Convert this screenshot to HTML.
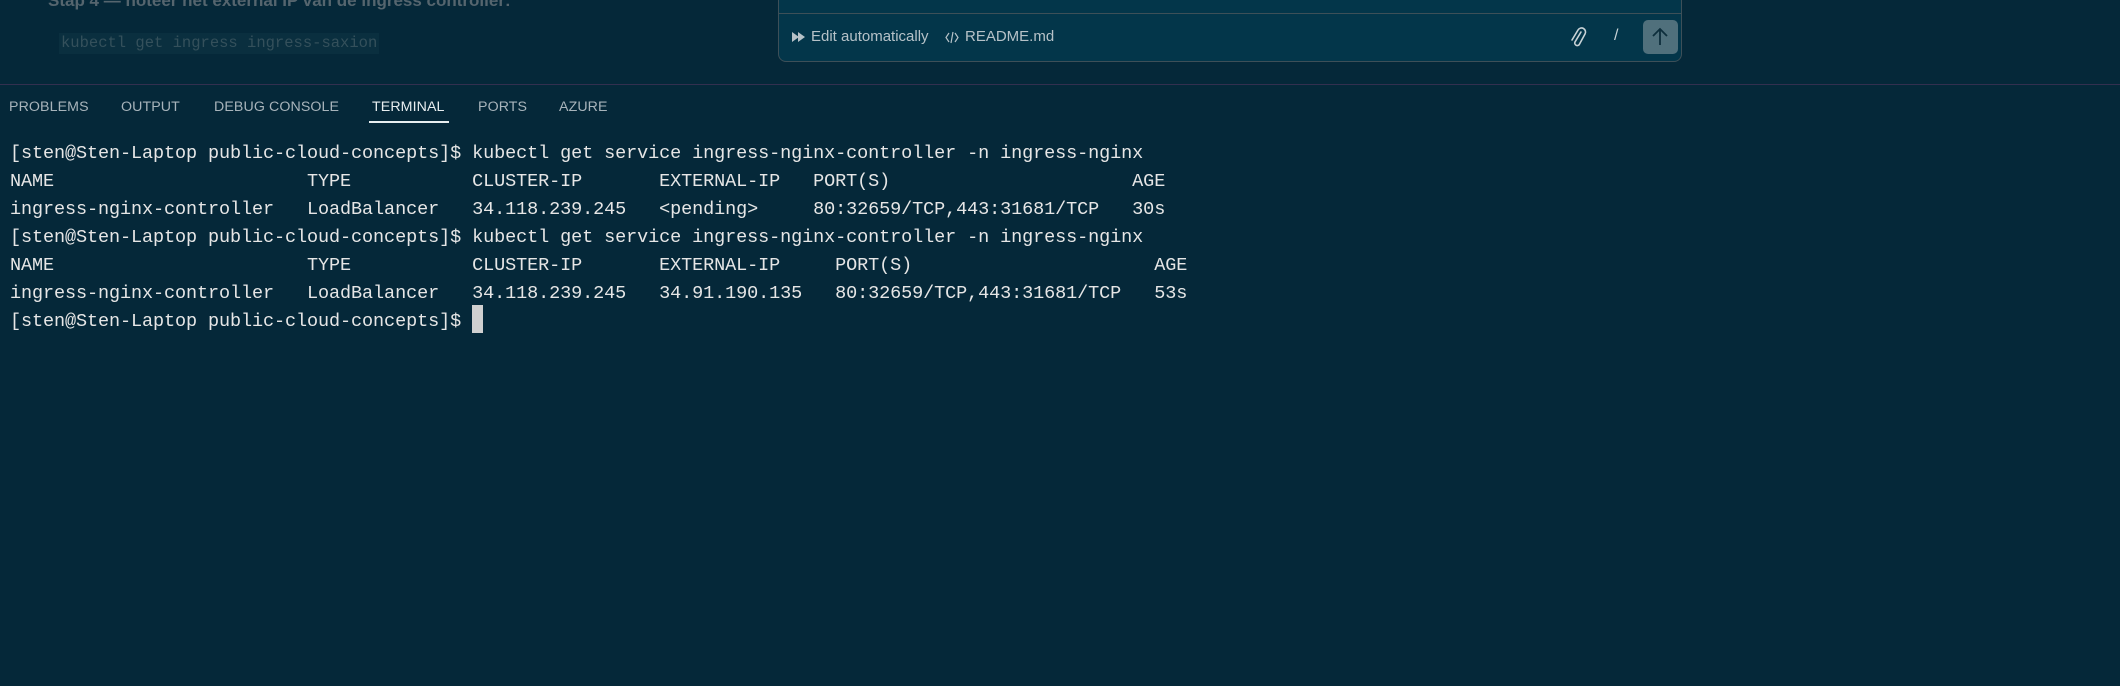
<!DOCTYPE html>
<html><head><meta charset="utf-8"><style>
html,body{margin:0;padding:0;width:2120px;height:686px;overflow:hidden;background:#052839;font-family:"Liberation Sans",sans-serif}
.abs{position:absolute}
.term{position:absolute;left:10px;top:139.5px;font-family:"Liberation Mono",monospace;font-size:18.5px;letter-spacing:-0.1px;line-height:28px;color:#e6e6e6;white-space:pre}
.tab{position:absolute;top:99px;font-size:14.2px;color:#a8b4bb;letter-spacing:0.1px}
</style></head><body>
<div class="abs" style="left:48px;top:-9px;font-size:17px;font-weight:bold;color:#55656e;white-space:nowrap">Stap 4 — noteer het external IP van de ingress controller:</div>
<div class="abs" style="left:59px;top:33px;width:320px;height:21px;background:#0a2f3f"></div>
<div class="abs" style="left:61px;top:34px;font-family:'Liberation Mono',monospace;font-size:15.5px;color:#34505b;white-space:pre">kubectl get ingress ingress-saxion</div>

<div class="abs" style="left:778px;top:-10px;width:904px;height:72px;background:#03364a;border:1px solid #3d4f58;border-radius:8px;box-sizing:border-box"></div>
<div class="abs" style="left:779px;top:13px;width:902px;height:1px;background:#3d5058"></div>
<svg class="abs" style="left:792px;top:32px" width="14" height="10" viewBox="0 0 14 10"><path d="M0 0 L7 5 L0 10Z M6 0 L13 5 L6 10Z" fill="#b6c2c8"/></svg>
<div class="abs" style="left:811px;top:28px;font-size:15px;color:#b6c2c8;white-space:nowrap">Edit automatically</div>
<svg class="abs" style="left:945px;top:31px" width="14" height="13" viewBox="0 0 14 13"><path d="M4 2 L1 6.5 L4 11 M10 2 L13 6.5 L10 11 M8 1 L6 12" fill="none" stroke="#b6c2c8" stroke-width="1.2"/></svg>
<div class="abs" style="left:965px;top:28px;font-size:15px;color:#b6c2c8">README.md</div>
<svg class="abs" style="left:1569px;top:26px" width="18" height="22" viewBox="0 0 18 22"><path d="M12 6 L6 16 a2.5 2.5 0 0 0 4.3 2.5 L16 8 a4 4 0 0 0 -7 -4 L3 14" fill="none" stroke="#c8d2d6" stroke-width="1.6" stroke-linecap="round"/></svg>
<div class="abs" style="left:1614px;top:27px;font-size:16px;color:#c8d2d6">/</div>
<div class="abs" style="left:1643px;top:20px;width:35px;height:34px;background:#50707c;border-radius:5px"></div>
<svg class="abs" style="left:1649px;top:26px" width="22" height="22" viewBox="0 0 22 22"><path d="M11 19 V3 M4 10 L11 3 L18 10" fill="none" stroke="#0d2e3c" stroke-width="1.8"/></svg>

<div class="abs" style="left:0;top:84px;width:2120px;height:1px;background:#33304f"></div>
<div class="tab" style="left:9px">PROBLEMS</div>
<div class="tab" style="left:121px">OUTPUT</div>
<div class="tab" style="left:214px">DEBUG CONSOLE</div>
<div class="tab" style="left:372px;color:#e8eef0">TERMINAL</div>
<div class="abs" style="left:369px;top:121px;width:80px;height:1.5px;background:#e8eef0"></div>
<div class="tab" style="left:478px">PORTS</div>
<div class="tab" style="left:559px">AZURE</div>

<div class="term">[sten@Sten-Laptop public-cloud-concepts]$ kubectl get service ingress-nginx-controller -n ingress-nginx
NAME                       TYPE           CLUSTER-IP       EXTERNAL-IP   PORT(S)                      AGE
ingress-nginx-controller   LoadBalancer   34.118.239.245   &lt;pending&gt;     80:32659/TCP,443:31681/TCP   30s
[sten@Sten-Laptop public-cloud-concepts]$ kubectl get service ingress-nginx-controller -n ingress-nginx
NAME                       TYPE           CLUSTER-IP       EXTERNAL-IP     PORT(S)                      AGE
ingress-nginx-controller   LoadBalancer   34.118.239.245   34.91.190.135   80:32659/TCP,443:31681/TCP   53s
[sten@Sten-Laptop public-cloud-concepts]$ </div>
<div class="abs" style="left:472px;top:305px;width:11px;height:28px;background:#d0d0d0"></div>
</body></html>
